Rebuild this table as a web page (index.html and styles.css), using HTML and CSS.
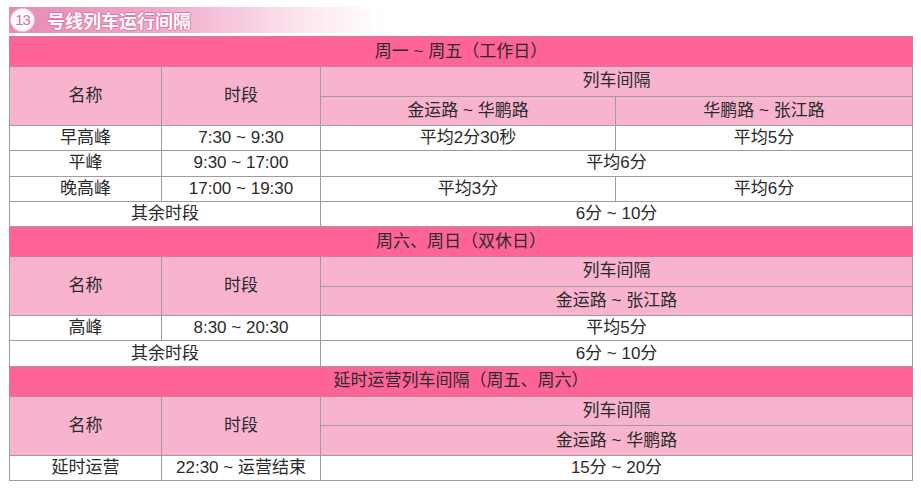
FILE: index.html
```html
<!DOCTYPE html>
<html lang="zh">
<head>
<meta charset="utf-8">
<link rel="stylesheet" href="styles.css">
</head>
<body>
<div class="title-bar">
  <span class="num">13</span>
  <span class="title">号线列车运行间隔</span>
</div>
<table class="grid">
  <colgroup>
    <col class="c1"><col class="c2"><col class="c3"><col class="c4">
  </colgroup>
  <tr class="sec"><td colspan="4">周一 ~ 周五（工作日）</td></tr>
  <tr class="hd"><td rowspan="2">名称</td><td rowspan="2">时段</td><td colspan="2">列车间隔</td></tr>
  <tr class="hd"><td>金运路 ~ 华鹏路</td><td>华鹏路 ~ 张江路</td></tr>
  <tr class="dt"><td>早高峰</td><td>7:30 ~ 9:30</td><td>平均2分30秒</td><td>平均5分</td></tr>
  <tr class="dt"><td>平峰</td><td>9:30 ~ 17:00</td><td colspan="2">平均6分</td></tr>
  <tr class="dt"><td>晚高峰</td><td>17:00 ~ 19:30</td><td>平均3分</td><td>平均6分</td></tr>
  <tr class="dt"><td colspan="2">其余时段</td><td colspan="2">6分 ~ 10分</td></tr>

  <tr class="sec"><td colspan="4">周六、周日（双休日）</td></tr>
  <tr class="hd"><td rowspan="2">名称</td><td rowspan="2">时段</td><td colspan="2">列车间隔</td></tr>
  <tr class="hd"><td colspan="2">金运路 ~ 张江路</td></tr>
  <tr class="dt"><td>高峰</td><td>8:30 ~ 20:30</td><td colspan="2">平均5分</td></tr>
  <tr class="dt"><td colspan="2">其余时段</td><td colspan="2">6分 ~ 10分</td></tr>

  <tr class="sec"><td colspan="4">延时运营列车间隔（周五、周六）</td></tr>
  <tr class="hd"><td rowspan="2">名称</td><td rowspan="2">时段</td><td colspan="2">列车间隔</td></tr>
  <tr class="hd"><td colspan="2">金运路 ~ 华鹏路</td></tr>
  <tr class="dt"><td>延时运营</td><td>22:30 ~ 运营结束</td><td colspan="2">15分 ~ 20分</td></tr>
</table>
</body>
</html>
```
FILE: styles.css
```css
html, body {
  margin: 0;
  padding: 0;
  background: #ffffff;
}
body {
  font-family: "Liberation Sans", "Noto Sans CJK SC", sans-serif;
  color: #2a2a2a;
  padding: 7px 0 0 9px;
}
.title-bar {
  width: 372px;
  height: 26px;
  display: flex;
  align-items: center;
  gap: 12px;
  padding-left: 1px;
  background: linear-gradient(to right, #e68ab6 0%, #f0a8c9 40%, #fbe0ec 75%, #ffffff 100%);
}
.num {
  width: 25px;
  height: 24px;
  box-sizing: border-box;
  border-radius: 50%;
  background: #ffffff;
  border: 1px solid #f3b6d0;
  color: #e06a9f;
  font-size: 15px;
  line-height: 22px;
  text-align: center;
  letter-spacing: -1px;
  font-family: "Liberation Sans", sans-serif;
}
.title {
  font-size: 18px;
  font-weight: bold;
  color: #ffffff;
  font-family: "Noto Sans CJK SC", sans-serif;
  text-shadow: 1px 0 0 #e07aa8, -1px 0 0 #e07aa8, 0 1px 0 #e07aa8, 0 -1px 0 #e07aa8;
}
.grid {
  margin-top: 3px;
  border-collapse: collapse;
  table-layout: fixed;
  width: 903px;
  font-size: 17px;
}
.c1 { width: 152px; }
.c2 { width: 159px; }
.c3 { width: 295px; }
.c4 { width: 297px; }
.grid td {
  border: 1px solid #a29aa0;
  text-align: center;
  padding: 0;
  white-space: nowrap;
  line-height: 20px;
}
.sec td {
  background: #ff6498;
  height: 29px;
  border-color: #c8809e;
}
.hd td {
  background: #f8b4cf;
  height: 28.5px;
}
.dt td {
  background: #ffffff;
  height: 24.3px;
}
```
